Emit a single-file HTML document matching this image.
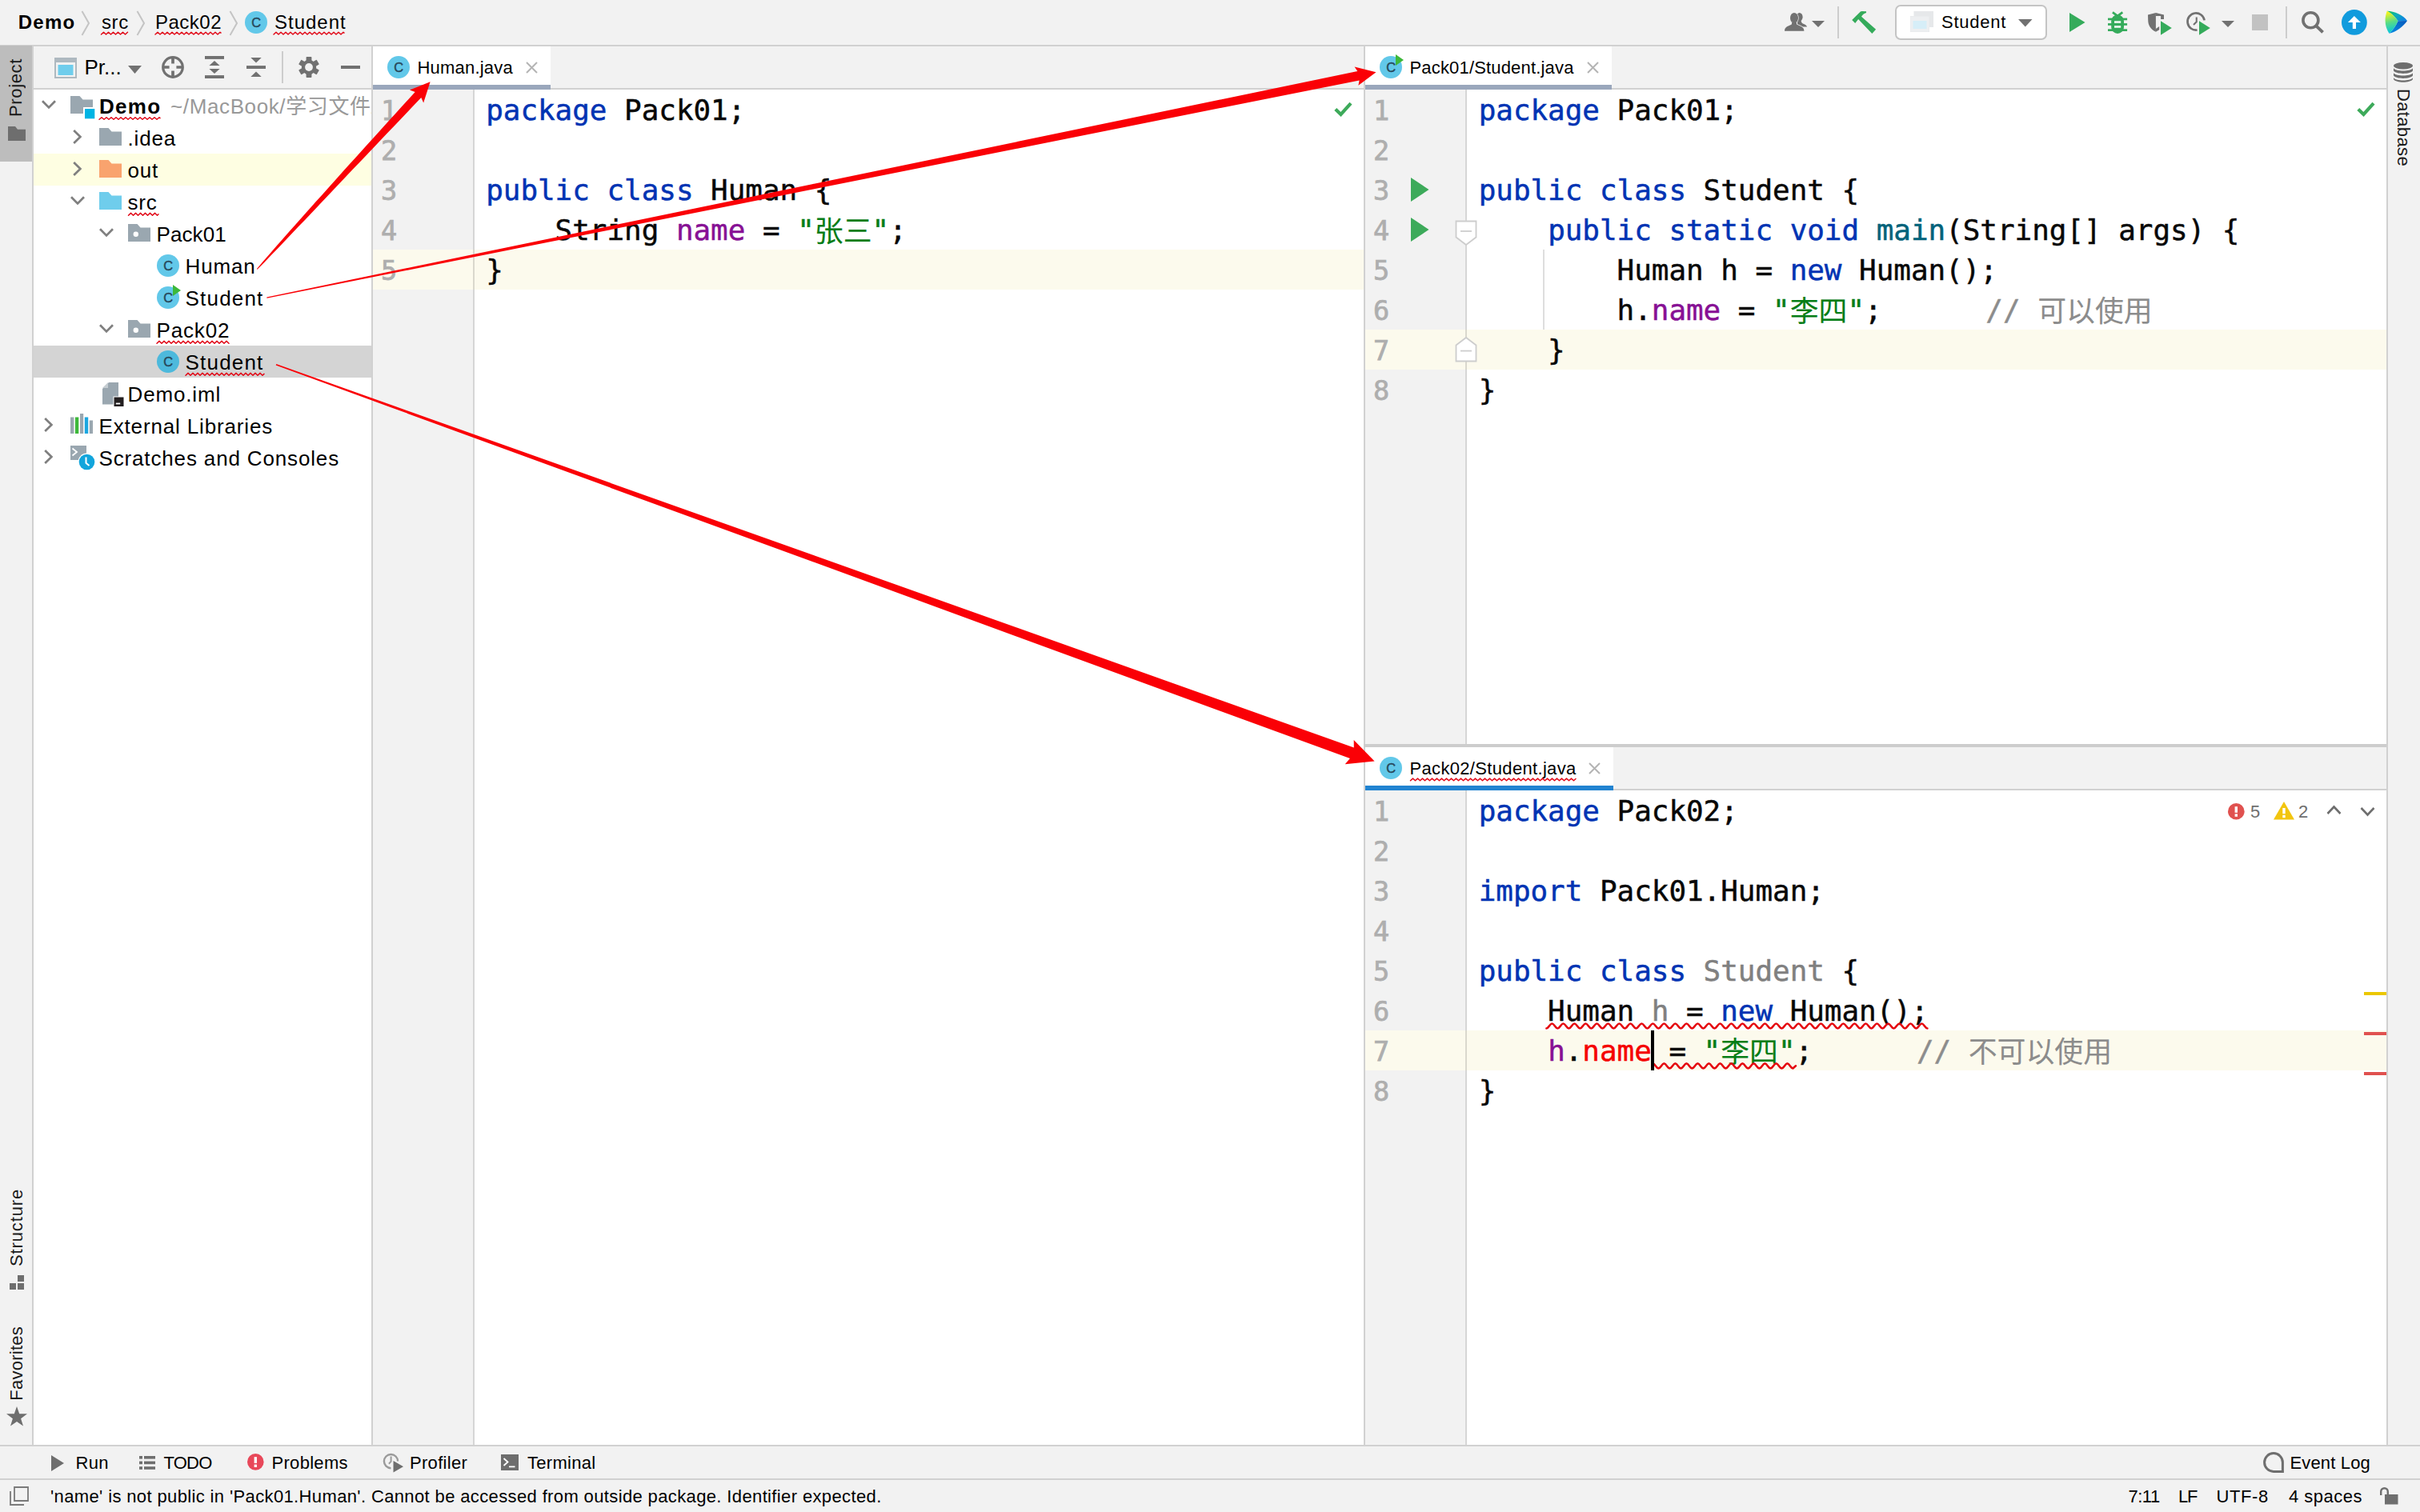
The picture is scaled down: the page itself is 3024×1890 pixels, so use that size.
<!DOCTYPE html>
<html lang="zh"><head><meta charset="utf-8"><title>Demo – Student.java</title>
<style>
*{box-sizing:border-box;margin:0;padding:0}
html,body{width:3024px;height:1890px;overflow:hidden;background:#F2F2F2}
body{position:relative;font-family:"Liberation Sans","Noto Sans CJK SC",sans-serif;font-size:26px;color:#000}
.code{position:absolute;height:50px;line-height:50px;margin-top:1.3px;font-family:"DejaVu Sans Mono","Liberation Mono","Noto Sans CJK SC",monospace;font-size:35.9px;white-space:pre;color:#080808;-webkit-text-stroke:0.5px}
.ln{position:absolute;height:50px;line-height:50px;margin-top:1.9px;font-family:"DejaVu Sans Mono","Liberation Mono","Noto Sans CJK SC",monospace;font-size:33.6px;color:#AEAEAE;-webkit-text-stroke:0.75px}
.z{-webkit-text-stroke:0.1px;position:relative;top:1.5px} .k{color:#0033B3} .f{color:#871094} .s{color:#067D17} .c{color:#8C8C8C} .m{color:#00627A} .g{color:#808080} .e{color:#F50000}
#root{position:absolute;left:0;top:0;width:3024px;height:1890px;overflow:hidden;background:#F2F2F2}
</style></head><body><div id="root">
<div style="position:absolute;left:0px;top:56px;width:3024px;height:2px;background:#D1D1D1;"></div>
<div style="position:absolute;left:0px;top:57px;width:40px;height:145px;background:#BDBDBD;"></div>
<div style="position:absolute;left:40px;top:58px;width:2px;height:1748px;background:#D1D1D1;"></div>
<div style="position:absolute;left:42px;top:110px;width:422px;height:2px;background:#D1D1D1;"></div>
<div style="position:absolute;left:42px;top:112px;width:422px;height:1694px;background:#fff;"></div>
<div style="position:absolute;left:464px;top:58px;width:2px;height:1748px;background:#D1D1D1;"></div>
<div style="position:absolute;left:466px;top:110px;width:1238px;height:2px;background:#D1D1D1;"></div>
<div style="position:absolute;left:466px;top:112px;width:126px;height:1694px;background:#F2F2F2;"></div>
<div style="position:absolute;left:591px;top:112px;width:2px;height:1694px;background:#D6D6D6;"></div>
<div style="position:absolute;left:593px;top:112px;width:1111px;height:1694px;background:#fff;"></div>
<div style="position:absolute;left:1704px;top:58px;width:2px;height:1748px;background:#D1D1D1;"></div>
<div style="position:absolute;left:1706px;top:110px;width:1276px;height:2px;background:#D1D1D1;"></div>
<div style="position:absolute;left:1706px;top:112px;width:126px;height:818px;background:#F2F2F2;"></div>
<div style="position:absolute;left:1831px;top:112px;width:2px;height:818px;background:#D6D6D6;"></div>
<div style="position:absolute;left:1833px;top:112px;width:1149px;height:818px;background:#fff;"></div>
<div style="position:absolute;left:1704px;top:930px;width:1278px;height:4px;background:#CDCDCD;"></div>
<div style="position:absolute;left:1706px;top:986px;width:1276px;height:2px;background:#D1D1D1;"></div>
<div style="position:absolute;left:1706px;top:988px;width:126px;height:818px;background:#F2F2F2;"></div>
<div style="position:absolute;left:1831px;top:988px;width:2px;height:818px;background:#D6D6D6;"></div>
<div style="position:absolute;left:1833px;top:988px;width:1149px;height:818px;background:#fff;"></div>
<div style="position:absolute;left:2982px;top:58px;width:2px;height:1748px;background:#D1D1D1;"></div>
<div style="position:absolute;left:0px;top:1806px;width:3024px;height:2px;background:#D1D1D1;"></div>
<div style="position:absolute;left:0px;top:1848px;width:3024px;height:2px;background:#D1D1D1;"></div>
<div style="position:absolute;left:22.8px;top:0px;height:56px;line-height:56px;font-size:24px;color:#000;letter-spacing:1.2px;white-space:pre;font-weight:bold;">Demo</div>
<svg style="position:absolute;left:101px;top:13px;" width="12" height="32" viewBox="0 0 12 32"><path d="M1.5,1 L10,16 L1.5,31" fill="none" stroke="#C4C4C4" stroke-width="2"/></svg>
<div style="position:absolute;left:127px;top:0px;height:56px;line-height:56px;font-size:24px;color:#000;letter-spacing:0.6px;white-space:pre;font-weight:normal;">src</div>
<svg style="position:absolute;left:169.5px;top:13px;" width="12" height="32" viewBox="0 0 12 32"><path d="M1.5,1 L10,16 L1.5,31" fill="none" stroke="#C4C4C4" stroke-width="2"/></svg>
<div style="position:absolute;left:194px;top:0px;height:56px;line-height:56px;font-size:24px;color:#000;letter-spacing:0.5px;white-space:pre;font-weight:normal;">Pack02</div>
<svg style="position:absolute;left:285.5px;top:13px;" width="12" height="32" viewBox="0 0 12 32"><path d="M1.5,1 L10,16 L1.5,31" fill="none" stroke="#C4C4C4" stroke-width="2"/></svg>
<svg style="position:absolute;left:304px;top:12px;" width="34" height="32" viewBox="0 0 34 32"><circle cx="16" cy="16" r="14" fill="#62C8E9"/><text x="16.2" y="21.7" text-anchor="middle" font-family="Liberation Sans, sans-serif" font-size="16.4" fill="#27475A" stroke="#27475A" stroke-width="0.45">C</text></svg>
<div style="position:absolute;left:343px;top:0px;height:56px;line-height:56px;font-size:24px;color:#000;letter-spacing:1.0px;white-space:pre;font-weight:normal;">Student</div>
<svg style="position:absolute;left:0px;top:0px;pointer-events:none" width="480" height="56" viewBox="0 0 480 56"><path d="M126.5,43.0 L129.5,40.2 L132.5,43.0 L135.5,40.2 L138.5,43.0 L141.5,40.2 L144.5,43.0 L147.5,40.2 L150.5,43.0 L153.5,40.2 L156.5,43.0 L159.5,40.2" fill="none" stroke="#E10A19" stroke-width="1.5" stroke-linecap="round" stroke-linejoin="round"/><path d="M194.0,43.0 L197.0,40.2 L200.0,43.0 L203.0,40.2 L206.0,43.0 L209.0,40.2 L212.0,43.0 L215.0,40.2 L218.0,43.0 L221.0,40.2 L224.0,43.0 L227.0,40.2 L230.0,43.0 L233.0,40.2 L236.0,43.0 L239.0,40.2 L242.0,43.0 L245.0,40.2 L248.0,43.0 L251.0,40.2 L254.0,43.0 L257.0,40.2 L260.0,43.0 L263.0,40.2 L266.0,43.0 L269.0,40.2 L272.0,43.0 L275.0,40.2 L276.0,41.1" fill="none" stroke="#E10A19" stroke-width="1.5" stroke-linecap="round" stroke-linejoin="round"/><path d="M342.0,43.0 L345.0,40.2 L348.0,43.0 L351.0,40.2 L354.0,43.0 L357.0,40.2 L360.0,43.0 L363.0,40.2 L366.0,43.0 L369.0,40.2 L372.0,43.0 L375.0,40.2 L378.0,43.0 L381.0,40.2 L384.0,43.0 L387.0,40.2 L390.0,43.0 L393.0,40.2 L396.0,43.0 L399.0,40.2 L402.0,43.0 L405.0,40.2 L408.0,43.0 L411.0,40.2 L414.0,43.0 L417.0,40.2 L420.0,43.0 L423.0,40.2 L426.0,43.0 L429.0,40.2 L430.0,41.1" fill="none" stroke="#E10A19" stroke-width="1.5" stroke-linecap="round" stroke-linejoin="round"/></svg>
<svg style="position:absolute;left:2229px;top:15px;" width="31" height="26" viewBox="0 0 31 26"><g fill="#717171"><ellipse cx="19.6" cy="6.3" rx="4" ry="5.4"/><path d="M17,10 H21.6 C21.6,13 22.6,14 25,15 C27.5,16 29,17.5 29,18.4 H17 Z"/></g><g fill="#717171" stroke="#F2F2F2" stroke-width="1.4" paint-order="stroke"><ellipse cx="13" cy="7.6" rx="5" ry="6.7"/><path d="M1,23.8 C1,18.5 5.5,17.6 9,16 C10.2,15.3 10.4,14 10.2,13 H15.8 C15.6,14 15.8,15.3 17,16 C20.5,17.6 25.4,18.5 25.4,23.8 Z"/></g><rect x="10.3" y="11" width="5.4" height="4" fill="#717171"/></svg>
<svg style="position:absolute;left:2264px;top:26px;" width="16" height="8" viewBox="0 0 16 8"><path d="M0,0 H16 L8,8 Z" fill="#717171"/></svg>
<div style="position:absolute;left:2296px;top:8px;width:2px;height:40px;background:#CDCDCD;"></div>
<svg style="position:absolute;left:2314px;top:13px;" width="31" height="30" viewBox="0 0 31 30"><path d="M0.2,11.9 L10.8,1.6 Q11.6,1 12.6,1 L18,1.2 V2.9 C15.4,3.6 13.2,5.3 12,7.7 L30.1,23.8 L25.3,28.9 L8.1,11.1 L4.2,15.9 Z" fill="#35AB5B"/></svg>
<div style="position:absolute;left:2368px;top:6px;width:190px;height:44px;background:#fff;border:2px solid #C4C4C4;border-radius:7px"></div>
<svg style="position:absolute;left:2387px;top:14px;" width="29" height="26" viewBox="0 0 29 26"><rect x="4.5" y="0" width="24.5" height="20" fill="#E6E8EA"/><rect x="0" y="6" width="24" height="20" fill="#E6E8EA"/><rect x="0.5" y="6.5" width="23" height="19" fill="#EDEFF1"/><rect x="3.5" y="12" width="17" height="10" fill="#D6EEF8"/></svg>
<div style="position:absolute;left:2426px;top:6px;height:44px;line-height:44px;font-size:22px;color:#000;letter-spacing:0.75px;white-space:pre;font-weight:normal;">Student</div>
<svg style="position:absolute;left:2522px;top:24px;" width="18" height="10" viewBox="0 0 18 10"><path d="M0,0 H17.5 L8.75,9.5 Z" fill="#717171"/></svg>
<svg style="position:absolute;left:2586px;top:16px;" width="20" height="24" viewBox="0 0 20 24"><path d="M0,0 L19.5,12 L0,24 Z" fill="#35AB5B"/></svg>
<svg style="position:absolute;left:2633px;top:14px;" width="26" height="28" viewBox="0 0 26 28"><g fill="#35AB5B"><path d="M5.2,12.3 A7.9,7.9 0 0 1 21,12.3 V20 A7.9,7.9 0 0 1 5.2,20 Z"/><rect x="1" y="8.6" width="24.1" height="2.7"/><rect x="1" y="15.1" width="24.1" height="2.7"/><rect x="1" y="22.3" width="24.1" height="2.7"/></g><path d="M6.9,1.3 L12.6,5.6 M19.3,1.3 L13.6,5.6" stroke="#35AB5B" stroke-width="2.7" fill="none"/><rect x="9" y="12.2" width="8.2" height="2.7" fill="#ECF7EF"/><rect x="9" y="18.1" width="8.2" height="2.7" fill="#ECF7EF"/></svg>
<svg style="position:absolute;left:2683px;top:16px;" width="32" height="28" viewBox="0 0 32 28"><g fill="#717171"><path d="M1,2.5 L10.9,0 V23.8 C4,20.4 1.2,15.4 1.2,9 Z"/><path d="M10.9,0 L21,2.5 V7.9 H17.1 V3.9 H10.9 Z"/><path d="M10.9,20 L15.2,17 V21.3 L10.9,23.8 Z"/></g><path d="M17,10.2 L30.8,19 L17,27.8 Z" fill="#35AB5B"/></svg>
<svg style="position:absolute;left:2731px;top:14px;" width="32" height="30" viewBox="0 0 32 30"><path d="M23.6,11.4 A10.6,10.6 0 1 0 14.6,23.5" fill="none" stroke="#717171" stroke-width="2.7"/><path d="M13.75,7.4 V13.2 L10,17" fill="none" stroke="#717171" stroke-width="2.1"/><path d="M17,12.2 L30.8,21 L17,29.8 Z" fill="#35AB5B"/></svg>
<svg style="position:absolute;left:2776px;top:26px;" width="16" height="8" viewBox="0 0 16 8"><path d="M0,0 H16 L8,8 Z" fill="#717171"/></svg>
<div style="position:absolute;left:2814px;top:18px;width:20px;height:20px;background:#C2C2C2;"></div>
<div style="position:absolute;left:2856px;top:8px;width:2px;height:40px;background:#CDCDCD;"></div>
<svg style="position:absolute;left:2875px;top:13px;" width="30" height="30" viewBox="0 0 30 30"><circle cx="12.4" cy="12.3" r="9.5" fill="none" stroke="#717171" stroke-width="3.6"/><path d="M19,19.1 L27.6,27.3" stroke="#717171" stroke-width="3.9" fill="none"/></svg>
<svg style="position:absolute;left:2926px;top:12px;" width="32" height="32" viewBox="0 0 32 32"><circle cx="15.9" cy="15.9" r="15.9" fill="#119BDD"/><path d="M15.85,8 L23.9,15.9 H18 V24 H13.8 V15.9 H7.9 Z" fill="#fff"/></svg>
<svg style="position:absolute;left:2979px;top:13px;" width="30" height="30" viewBox="0 0 30 30"><defs><linearGradient id="lg1" x1="0.3" y1="0" x2="0.45" y2="1"><stop offset="0.05" stop-color="#F4F41C"/><stop offset=".5" stop-color="#58DC86"/><stop offset="1" stop-color="#00C4E2"/></linearGradient><linearGradient id="lg2" x1="0" y1="0" x2="1" y2="0.5"><stop offset="0" stop-color="#10C64E"/><stop offset=".5" stop-color="#0CB0B4"/><stop offset="1" stop-color="#0E86E0"/></linearGradient><linearGradient id="lg3" x1="1" y1="0" x2="0" y2="1"><stop offset="0" stop-color="#0658BC"/><stop offset="1" stop-color="#0A8EE2"/></linearGradient></defs><path d="M3.8,0.8 C13,1 24,6 29,12.9 L17.5,13.2 C14,8 9,3.5 3.8,0.8 Z" fill="url(#lg2)"/><path d="M29,12.9 L17.5,13.2 C15,19 11,25 6.4,28.8 C15,27 24,20 29,12.9 Z" fill="url(#lg3)"/><path d="M3.8,0.8 C9,3.5 14,8 17.5,13.2 C15,19 11,25 6.4,28.8 C2,22 -0.5,12 3.8,0.8 Z" fill="url(#lg1)"/></svg>
<div style="position:absolute;left:0px;top:-253.8px;width:40px;height:400px;"><div style="position:absolute;left:0;bottom:0;writing-mode:vertical-rl;transform:rotate(180deg);width:40px;line-height:40px;font-size:22px;letter-spacing:0.65px;white-space:pre;color:#1a1a1a">Project</div></div>
<svg style="position:absolute;left:10px;top:158px;" width="22" height="18" viewBox="0 0 22 18"><path d="M0,0 H9 L12,3.8 H22 V18 H0 Z" fill="#6E6E6E"/></svg>
<div style="position:absolute;left:0.8px;top:1182.5px;width:40px;height:400px;"><div style="position:absolute;left:0;bottom:0;writing-mode:vertical-rl;transform:rotate(180deg);width:40px;line-height:40px;font-size:22px;letter-spacing:0.85px;white-space:pre;color:#1a1a1a">Structure</div></div>
<svg style="position:absolute;left:12px;top:1594px;" width="18" height="18" viewBox="0 0 18 18"><g fill="#6E6E6E"><rect x="10" y="0" width="8" height="8"/><rect x="0" y="10" width="8" height="8"/><rect x="10" y="10" width="8" height="8"/></g></svg>
<div style="position:absolute;left:0.8px;top:1350.4px;width:40px;height:400px;"><div style="position:absolute;left:0;bottom:0;writing-mode:vertical-rl;transform:rotate(180deg);width:40px;line-height:40px;font-size:22px;letter-spacing:0.25px;white-space:pre;color:#1a1a1a">Favorites</div></div>
<svg style="position:absolute;left:8px;top:1758px;" width="26" height="25" viewBox="0 0 26 25"><path d="M13,0 L16.2,9.3 H26 L18.1,15.2 L21,24.6 L13,19 L5,24.6 L7.9,15.2 L0,9.3 H9.8 Z" fill="#6E6E6E"/></svg>
<svg style="position:absolute;left:2991px;top:78px;" width="24" height="25" viewBox="0 0 24 25"><g fill="#6E6E6E"><ellipse cx="12" cy="4.2" rx="12" ry="4.2"/><path d="M0,7.2 C3,11.5 21,11.5 24,7.2 V10.5 C21,15 3,15 0,10.5 Z"/><path d="M0,13.2 C3,17.5 21,17.5 24,13.2 V16.5 C21,21 3,21 0,16.5 Z"/><path d="M0,19.2 C3,23.5 21,23.5 24,19.2 V21 C21,26 3,26 0,21 Z"/></g></svg>
<div style="position:absolute;left:2982.8px;top:111.4px;width:40px;line-height:40px;writing-mode:vertical-rl;font-size:22px;letter-spacing:0.35px;white-space:pre;color:#1a1a1a">Database</div>
<svg style="position:absolute;left:68px;top:72px;" width="28" height="26" viewBox="0 0 28 26"><rect x="0" y="0" width="28" height="26" fill="#AEB9C0"/><rect x="2" y="6" width="24" height="18" fill="#F2F2F2"/><rect x="4.5" y="9" width="19" height="13" fill="#6FCDEC"/></svg>
<div style="position:absolute;left:105.5px;top:58px;height:52px;line-height:52px;font-size:26px;color:#000;letter-spacing:0.0px;white-space:pre;font-weight:normal;">Pr...</div>
<svg style="position:absolute;left:160px;top:82px;" width="17" height="10" viewBox="0 0 17 10"><path d="M0,0 H17 L8.5,10 Z" fill="#717171"/></svg>
<svg style="position:absolute;left:201px;top:69px;" width="30" height="30" viewBox="0 0 30 30"><circle cx="15" cy="15" r="12.3" fill="none" stroke="#717171" stroke-width="3.2"/><g stroke="#717171" stroke-width="3.7"><path d="M15,3 V10.6 M15,19.4 V27 M3,15 H10.6 M19.4,15 H27"/></g></svg>
<svg style="position:absolute;left:256px;top:70px;" width="24" height="28" viewBox="0 0 24 28"><g fill="#717171"><rect x="0" y="0" width="24" height="3.9"/><rect x="0" y="24.1" width="24" height="3.9"/><path d="M12,6 L18.6,11.9 H5.4 Z"/><path d="M12,22 L18.6,16.1 H5.4 Z"/></g></svg>
<svg style="position:absolute;left:308px;top:71px;" width="24" height="26" viewBox="0 0 24 26"><g fill="#717171"><rect x="0" y="11.1" width="24" height="3.9"/><path d="M12,7.6 L18.7,1 H5.3 Z"/><path d="M12,18.4 L18.7,25 H5.3 Z"/></g></svg>
<div style="position:absolute;left:352px;top:64px;width:2px;height:40px;background:#CDCDCD;"></div>
<svg style="position:absolute;left:373px;top:71px;" width="26" height="26" viewBox="0 0 26 26"><g fill="#717171"><circle cx="13" cy="13" r="9.2"/><rect x="9.6" y="0" width="6.8" height="7" rx="0.8" transform="rotate(0 13 13)"/><rect x="9.6" y="0" width="6.8" height="7" rx="0.8" transform="rotate(60 13 13)"/><rect x="9.6" y="0" width="6.8" height="7" rx="0.8" transform="rotate(120 13 13)"/><rect x="9.6" y="0" width="6.8" height="7" rx="0.8" transform="rotate(180 13 13)"/><rect x="9.6" y="0" width="6.8" height="7" rx="0.8" transform="rotate(240 13 13)"/><rect x="9.6" y="0" width="6.8" height="7" rx="0.8" transform="rotate(300 13 13)"/></g><circle cx="13" cy="13" r="4.9" fill="#F2F2F2"/></svg>
<div style="position:absolute;left:426px;top:82px;width:24px;height:4px;background:#717171;"></div>
<div style="position:absolute;left:42px;top:192px;width:422px;height:40px;background:#FEFEE2;"></div>
<div style="position:absolute;left:42px;top:432px;width:422px;height:40px;background:#D4D4D4;"></div>
<svg style="position:absolute;left:52px;top:125px;" width="18" height="12" viewBox="0 0 18 12"><path d="M1,1.2 L9,9.4 L17,1.2" fill="none" stroke="#7F7F7F" stroke-width="2.7"/></svg>
<svg style="position:absolute;left:88px;top:120px;" width="31" height="29" viewBox="0 0 31 29"><path d="M0,0 H11.5 L15.5,4.5 H28 V22 H0 Z" fill="#9AA7B0"/><rect x="16" y="14" width="15" height="15" fill="#fff"/><rect x="18" y="16" width="12.3" height="12.3" fill="#00B4E4"/></svg>
<div style="position:absolute;left:124.0px;top:113px;height:40px;line-height:40px;font-size:26px;color:#000;letter-spacing:1.3px;white-space:pre;font-weight:bold;">Demo</div>
<div style="position:absolute;left:213.0px;top:113px;height:40px;line-height:40px;font-size:26px;color:#999999;letter-spacing:0.62px;white-space:pre;font-weight:normal;width:251px;overflow:hidden;">~/MacBook/学习文件/Java</div>
<svg style="position:absolute;left:91px;top:162px;" width="12" height="18" viewBox="0 0 12 18"><path d="M1.2,1 L9.4,9 L1.2,17" fill="none" stroke="#7F7F7F" stroke-width="2.7"/></svg>
<svg style="position:absolute;left:124px;top:160px;" width="28" height="22" viewBox="0 0 28 22"><path d="M0,0 H11.5 L15.5,4.5 H28 V22 H0 Z" fill="#9AA7B0"/></svg>
<div style="position:absolute;left:159.5px;top:153px;height:40px;line-height:40px;font-size:26px;color:#000;letter-spacing:0.85px;white-space:pre;font-weight:normal;">.idea</div>
<svg style="position:absolute;left:91px;top:202px;" width="12" height="18" viewBox="0 0 12 18"><path d="M1.2,1 L9.4,9 L1.2,17" fill="none" stroke="#7F7F7F" stroke-width="2.7"/></svg>
<svg style="position:absolute;left:124px;top:200px;" width="28" height="22" viewBox="0 0 28 22"><path d="M0,0 H11.5 L15.5,4.5 H28 V22 H0 Z" fill="#F9A36E"/></svg>
<div style="position:absolute;left:159.5px;top:193px;height:40px;line-height:40px;font-size:26px;color:#000;letter-spacing:0.85px;white-space:pre;font-weight:normal;">out</div>
<svg style="position:absolute;left:88px;top:245px;" width="18" height="12" viewBox="0 0 18 12"><path d="M1,1.2 L9,9.4 L17,1.2" fill="none" stroke="#7F7F7F" stroke-width="2.7"/></svg>
<svg style="position:absolute;left:124px;top:240px;" width="28" height="22" viewBox="0 0 28 22"><path d="M0,0 H11.5 L15.5,4.5 H28 V22 H0 Z" fill="#6FCDEC"/></svg>
<div style="position:absolute;left:159.5px;top:233px;height:40px;line-height:40px;font-size:26px;color:#000;letter-spacing:0.85px;white-space:pre;font-weight:normal;">src</div>
<svg style="position:absolute;left:124px;top:285px;" width="18" height="12" viewBox="0 0 18 12"><path d="M1,1.2 L9,9.4 L17,1.2" fill="none" stroke="#7F7F7F" stroke-width="2.7"/></svg>
<svg style="position:absolute;left:160px;top:280px;" width="28" height="22" viewBox="0 0 28 22"><path d="M0,0 H11.5 L15.5,4.5 H28 V22 H0 Z" fill="#9AA7B0"/><circle cx="9.8" cy="12.8" r="3.2" fill="#fff"/></svg>
<div style="position:absolute;left:195.5px;top:273px;height:40px;line-height:40px;font-size:26px;color:#000;letter-spacing:0.1px;white-space:pre;font-weight:normal;">Pack01</div>
<svg style="position:absolute;left:194px;top:316px;" width="34" height="32" viewBox="0 0 34 32"><circle cx="16" cy="16" r="14" fill="#62C8E9"/><text x="16.2" y="21.7" text-anchor="middle" font-family="Liberation Sans, sans-serif" font-size="16.4" fill="#27475A" stroke="#27475A" stroke-width="0.45">C</text></svg>
<div style="position:absolute;left:231.5px;top:313px;height:40px;line-height:40px;font-size:26px;color:#000;letter-spacing:0.85px;white-space:pre;font-weight:normal;">Human</div>
<svg style="position:absolute;left:194px;top:356px;" width="34" height="32" viewBox="0 0 34 32"><circle cx="16" cy="16" r="14" fill="#62C8E9"/><path d="M20,-1 V15 L33,6.5 Z" fill="#fff" opacity="0"/><text x="16.2" y="21.7" text-anchor="middle" font-family="Liberation Sans, sans-serif" font-size="16.4" fill="#27475A" stroke="#27475A" stroke-width="0.45">C</text><path d="M22,0 V14 L32,7 Z" fill="#3DB83A"/></svg>
<div style="position:absolute;left:231.5px;top:353px;height:40px;line-height:40px;font-size:26px;color:#000;letter-spacing:1.2px;white-space:pre;font-weight:normal;">Student</div>
<svg style="position:absolute;left:124px;top:405px;" width="18" height="12" viewBox="0 0 18 12"><path d="M1,1.2 L9,9.4 L17,1.2" fill="none" stroke="#7F7F7F" stroke-width="2.7"/></svg>
<svg style="position:absolute;left:160px;top:400px;" width="28" height="22" viewBox="0 0 28 22"><path d="M0,0 H11.5 L15.5,4.5 H28 V22 H0 Z" fill="#9AA7B0"/><circle cx="9.8" cy="12.8" r="3.2" fill="#fff"/></svg>
<div style="position:absolute;left:195.5px;top:393px;height:40px;line-height:40px;font-size:26px;color:#000;letter-spacing:0.85px;white-space:pre;font-weight:normal;">Pack02</div>
<svg style="position:absolute;left:194px;top:436px;" width="34" height="32" viewBox="0 0 34 32"><circle cx="16" cy="16" r="14" fill="#4DB9DC"/><text x="16.2" y="21.7" text-anchor="middle" font-family="Liberation Sans, sans-serif" font-size="16.4" fill="#27475A" stroke="#27475A" stroke-width="0.45">C</text></svg>
<div style="position:absolute;left:231.5px;top:433px;height:40px;line-height:40px;font-size:26px;color:#000;letter-spacing:1.2px;white-space:pre;font-weight:normal;">Student</div>
<svg style="position:absolute;left:128px;top:478px;" width="27" height="30" viewBox="0 0 27 30"><path d="M8,0 H20 V27.5 H0 V8 Z" fill="#9AA7B0"/><path d="M7,0 V7 H0 Z" fill="#C4CCD1"/><rect x="13.5" y="17.5" width="13" height="12.5" fill="#fff"/><rect x="14.5" y="18.5" width="12" height="11.5" fill="#231F20"/><rect x="16.8" y="25.6" width="5.4" height="1.8" fill="#fff"/></svg>
<div style="position:absolute;left:159.5px;top:473px;height:40px;line-height:40px;font-size:26px;color:#000;letter-spacing:0.85px;white-space:pre;font-weight:normal;">Demo.iml</div>
<svg style="position:absolute;left:55px;top:522px;" width="12" height="18" viewBox="0 0 12 18"><path d="M1.2,1 L9.4,9 L1.2,17" fill="none" stroke="#7F7F7F" stroke-width="2.7"/></svg>
<svg style="position:absolute;left:88px;top:517px;" width="28" height="25" viewBox="0 0 28 25"><rect x="0" y="4.5" width="4.4" height="20.5" fill="#9AA7B0"/><rect x="5.9" y="4.5" width="4.4" height="20.5" fill="#3DB83A"/><rect x="12" y="0" width="4.2" height="25" fill="#9AA7B0"/><rect x="17.8" y="4.5" width="4.4" height="20.5" fill="#1CA7E0"/><rect x="23.8" y="8.5" width="4.2" height="16.5" fill="#9AA7B0"/></svg>
<div style="position:absolute;left:123.5px;top:513px;height:40px;line-height:40px;font-size:26px;color:#000;letter-spacing:0.85px;white-space:pre;font-weight:normal;">External Libraries</div>
<svg style="position:absolute;left:55px;top:562px;" width="12" height="18" viewBox="0 0 12 18"><path d="M1.2,1 L9.4,9 L1.2,17" fill="none" stroke="#7F7F7F" stroke-width="2.7"/></svg>
<svg style="position:absolute;left:88px;top:557px;" width="31" height="31" viewBox="0 0 31 31"><rect x="0" y="0" width="20" height="18" fill="#9AA7B0"/><path d="M2.5,3.5 L8,8 L2.5,12.5" fill="none" stroke="#fff" stroke-width="1.8"/><circle cx="20.5" cy="20.5" r="11" fill="#fff"/><circle cx="20.5" cy="20.5" r="9.8" fill="#12A5DC"/><path d="M19.5,14.5 V21.8 L23.5,25" fill="none" stroke="#fff" stroke-width="2"/></svg>
<div style="position:absolute;left:123.5px;top:553px;height:40px;line-height:40px;font-size:26px;color:#000;letter-spacing:0.85px;white-space:pre;font-weight:normal;">Scratches and Consoles</div>
<svg style="position:absolute;left:0px;top:0px;pointer-events:none" width="480" height="620" viewBox="0 0 480 620"><path d="M124.0,149.3 L127.0,146.7 L130.0,149.3 L133.0,146.7 L136.0,149.3 L139.0,146.7 L142.0,149.3 L145.0,146.7 L148.0,149.3 L151.0,146.7 L154.0,149.3 L157.0,146.7 L160.0,149.3 L163.0,146.7 L166.0,149.3 L169.0,146.7 L172.0,149.3 L175.0,146.7 L178.0,149.3 L181.0,146.7 L184.0,149.3 L187.0,146.7 L190.0,149.3 L193.0,146.7 L196.0,149.3 L199.0,146.7 L200.0,147.6" fill="none" stroke="#E10A19" stroke-width="1.5" stroke-linecap="round" stroke-linejoin="round"/><path d="M160.5,269.2 L163.5,266.4 L166.5,269.2 L169.5,266.4 L172.5,269.2 L175.5,266.4 L178.5,269.2 L181.5,266.4 L184.5,269.2 L187.5,266.4 L190.5,269.2 L193.5,266.4 L196.5,269.2 L198.0,267.8" fill="none" stroke="#E10A19" stroke-width="1.5" stroke-linecap="round" stroke-linejoin="round"/><path d="M196.0,429.2 L199.0,426.4 L202.0,429.2 L205.0,426.4 L208.0,429.2 L211.0,426.4 L214.0,429.2 L217.0,426.4 L220.0,429.2 L223.0,426.4 L226.0,429.2 L229.0,426.4 L232.0,429.2 L235.0,426.4 L238.0,429.2 L241.0,426.4 L244.0,429.2 L247.0,426.4 L250.0,429.2 L253.0,426.4 L256.0,429.2 L259.0,426.4 L262.0,429.2 L265.0,426.4 L268.0,429.2 L271.0,426.4 L274.0,429.2 L277.0,426.4 L280.0,429.2 L283.0,426.4 L286.0,429.2" fill="none" stroke="#E10A19" stroke-width="1.5" stroke-linecap="round" stroke-linejoin="round"/><path d="M232.0,469.2 L235.0,466.4 L238.0,469.2 L241.0,466.4 L244.0,469.2 L247.0,466.4 L250.0,469.2 L253.0,466.4 L256.0,469.2 L259.0,466.4 L262.0,469.2 L265.0,466.4 L268.0,469.2 L271.0,466.4 L274.0,469.2 L277.0,466.4 L280.0,469.2 L283.0,466.4 L286.0,469.2 L289.0,466.4 L292.0,469.2 L295.0,466.4 L298.0,469.2 L301.0,466.4 L304.0,469.2 L307.0,466.4 L310.0,469.2 L313.0,466.4 L316.0,469.2 L319.0,466.4 L322.0,469.2 L325.0,466.4 L328.0,469.2 L330.0,467.4" fill="none" stroke="#E10A19" stroke-width="1.5" stroke-linecap="round" stroke-linejoin="round"/></svg>
<div style="position:absolute;left:466px;top:58px;width:222px;height:52px;background:#fff;"></div>
<div style="position:absolute;left:466px;top:106px;width:222px;height:6px;background:#9AA7BC;"></div>
<svg style="position:absolute;left:482px;top:68px;" width="34" height="32" viewBox="0 0 34 32"><circle cx="16" cy="16" r="14" fill="#62C8E9"/><text x="16.2" y="21.7" text-anchor="middle" font-family="Liberation Sans, sans-serif" font-size="16.4" fill="#27475A" stroke="#27475A" stroke-width="0.45">C</text></svg>
<div style="position:absolute;left:521.5px;top:60px;height:50px;line-height:50px;font-size:22px;color:#000;letter-spacing:0.2px;white-space:pre;font-weight:normal;">Human.java</div>
<svg style="position:absolute;left:656.5px;top:77px;" width="15" height="15" viewBox="0 0 15 15"><path d="M1,1 L14,14 M14,1 L1,14" stroke="#B4B4B4" stroke-width="2" fill="none"/></svg>
<div style="position:absolute;left:1706px;top:58px;width:308px;height:52px;background:#fff;"></div>
<div style="position:absolute;left:1706px;top:106px;width:308px;height:6px;background:#9AA7BC;"></div>
<svg style="position:absolute;left:1722px;top:68px;" width="34" height="32" viewBox="0 0 34 32"><circle cx="16" cy="16" r="14" fill="#62C8E9"/><path d="M20,-1 V15 L33,6.5 Z" fill="#fff" opacity="0"/><text x="16.2" y="21.7" text-anchor="middle" font-family="Liberation Sans, sans-serif" font-size="16.4" fill="#27475A" stroke="#27475A" stroke-width="0.45">C</text><path d="M22,0 V14 L32,7 Z" fill="#3DB83A"/></svg>
<div style="position:absolute;left:1761.5px;top:60px;height:50px;line-height:50px;font-size:22px;color:#000;letter-spacing:0.17px;white-space:pre;font-weight:normal;">Pack01/Student.java</div>
<svg style="position:absolute;left:1982.5px;top:77px;" width="15" height="15" viewBox="0 0 15 15"><path d="M1,1 L14,14 M14,1 L1,14" stroke="#B4B4B4" stroke-width="2" fill="none"/></svg>
<div style="position:absolute;left:1706px;top:934px;width:310px;height:52px;background:#fff;"></div>
<div style="position:absolute;left:1706px;top:982px;width:310px;height:6px;background:#2183D1;"></div>
<svg style="position:absolute;left:1722px;top:944px;" width="34" height="32" viewBox="0 0 34 32"><circle cx="16" cy="16" r="14" fill="#62C8E9"/><text x="16.2" y="21.7" text-anchor="middle" font-family="Liberation Sans, sans-serif" font-size="16.4" fill="#27475A" stroke="#27475A" stroke-width="0.45">C</text></svg>
<div style="position:absolute;left:1761.5px;top:936px;height:50px;line-height:50px;font-size:22px;color:#000;letter-spacing:0.33px;white-space:pre;font-weight:normal;">Pack02/Student.java</div>
<svg style="position:absolute;left:1984.5px;top:953px;" width="15" height="15" viewBox="0 0 15 15"><path d="M1,1 L14,14 M14,1 L1,14" stroke="#B4B4B4" stroke-width="2" fill="none"/></svg>
<svg style="position:absolute;left:1750px;top:960px;pointer-events:none" width="240" height="24" viewBox="0 0 240 24"><path d="M12.5,15.8 L15.5,13.1 L18.5,15.8 L21.5,13.1 L24.5,15.8 L27.5,13.1 L30.5,15.8 L33.5,13.1 L36.5,15.8 L39.5,13.1 L42.5,15.8 L45.5,13.1 L48.5,15.8 L51.5,13.1 L54.5,15.8 L57.5,13.1 L60.5,15.8 L63.5,13.1 L66.5,15.8 L69.5,13.1 L72.5,15.8 L75.5,13.1 L78.5,15.8 L81.5,13.1 L84.5,15.8 L87.5,13.1 L90.5,15.8 L93.5,13.1 L96.5,15.8 L99.5,13.1 L102.5,15.8 L105.5,13.1 L108.5,15.8 L111.5,13.1 L114.5,15.8 L117.5,13.1 L120.5,15.8 L123.5,13.1 L126.5,15.8 L129.5,13.1 L132.5,15.8 L135.5,13.1 L138.5,15.8 L141.5,13.1 L144.5,15.8 L147.5,13.1 L150.5,15.8 L153.5,13.1 L156.5,15.8 L159.5,13.1 L162.5,15.8 L165.5,13.1 L168.5,15.8 L171.5,13.1 L174.5,15.8 L177.5,13.1 L180.5,15.8 L183.5,13.1 L186.5,15.8 L189.5,13.1 L192.5,15.8 L195.5,13.1 L198.5,15.8 L201.5,13.1 L204.5,15.8 L207.5,13.1 L210.5,15.8 L213.5,13.1 L216.5,15.8 L219.0,13.5" fill="none" stroke="#E10A19" stroke-width="1.5" stroke-linecap="round" stroke-linejoin="round"/></svg>
<div style="position:absolute;left:466px;top:312px;width:1238px;height:50px;background:#FCFAED;"></div>
<div class="ln" style="left:475.9px;top:112px">1</div>
<div class="code" style="left:607.2px;top:112px"><span class="k">package</span> Pack01;</div>
<div class="ln" style="left:475.9px;top:162px">2</div>
<div class="ln" style="left:475.9px;top:212px">3</div>
<div class="code" style="left:607.2px;top:212px"><span class="k">public</span> <span class="k">class</span> Human {</div>
<div class="ln" style="left:475.9px;top:262px">4</div>
<div class="code" style="left:607.2px;top:262px">    String <span class="f">name</span> = <span class="s">"<span class="z">张三</span>"</span>;</div>
<div class="ln" style="left:475.9px;top:312px">5</div>
<div class="code" style="left:607.2px;top:312px">}</div>
<div style="position:absolute;left:591px;top:312px;width:2px;height:50px;background:#DAD8CD;"></div>
<svg style="position:absolute;left:1667px;top:127px;" width="23" height="19" viewBox="0 0 23 19"><path d="M1.8,9.5 L8.5,16 L21,2.2" fill="none" stroke="#3DAA5A" stroke-width="4.2"/></svg>
<div style="position:absolute;left:1706px;top:412px;width:1276px;height:50px;background:#FCFAED;"></div>
<div class="ln" style="left:1715.9px;top:112px">1</div>
<div class="code" style="left:1847.7px;top:112px"><span class="k">package</span> Pack01;</div>
<div class="ln" style="left:1715.9px;top:162px">2</div>
<div class="ln" style="left:1715.9px;top:212px">3</div>
<div class="code" style="left:1847.7px;top:212px"><span class="k">public</span> <span class="k">class</span> Student {</div>
<div class="ln" style="left:1715.9px;top:262px">4</div>
<div class="code" style="left:1847.7px;top:262px">    <span class="k">public</span> <span class="k">static</span> <span class="k">void</span> <span class="m">main</span>(String[] args) {</div>
<div class="ln" style="left:1715.9px;top:312px">5</div>
<div class="code" style="left:1847.7px;top:312px">        Human h = <span class="k">new</span> Human();</div>
<div class="ln" style="left:1715.9px;top:362px">6</div>
<div class="code" style="left:1847.7px;top:362px">        h.<span class="f">name</span> = <span class="s">"<span class="z">李四</span>"</span>;      <span class="c">// <span class="z">可以使用</span></span></div>
<div class="ln" style="left:1715.9px;top:412px">7</div>
<div class="code" style="left:1847.7px;top:412px">    }</div>
<div class="ln" style="left:1715.9px;top:462px">8</div>
<div class="code" style="left:1847.7px;top:462px">}</div>
<svg style="position:absolute;left:2944.5px;top:127px;" width="23" height="19" viewBox="0 0 23 19"><path d="M1.8,9.5 L8.5,16 L21,2.2" fill="none" stroke="#3DAA5A" stroke-width="4.2"/></svg>
<svg style="position:absolute;left:1763px;top:222px;" width="23" height="30" viewBox="0 0 23 30"><path d="M0,0 L22.5,15 L0,30 Z" fill="#3DAA5A"/></svg>
<svg style="position:absolute;left:1763px;top:272px;" width="23" height="30" viewBox="0 0 23 30"><path d="M0,0 L22.5,15 L0,30 Z" fill="#3DAA5A"/></svg>
<div style="position:absolute;left:1831px;top:306px;width:2px;height:116px;background:#D6D6D6;"></div>
<div style="position:absolute;left:1831px;top:412px;width:2px;height:50px;background:#DAD8CD;"></div>
<svg style="position:absolute;left:1818px;top:275px;" width="28" height="33" viewBox="0 0 28 33"><path d="M1.5,1.5 H26.5 V21.5 L14,31 L1.5,21.5 Z" fill="#fff" stroke="#CDCDCD" stroke-width="1.8"/><path d="M7,14 H21" stroke="#CDCDCD" stroke-width="1.8"/></svg>
<svg style="position:absolute;left:1818px;top:420px;" width="28" height="33" viewBox="0 0 28 33"><path d="M1.5,31.5 H26.5 V11.5 L14,2 L1.5,11.5 Z" fill="#fff" stroke="#CDCDCD" stroke-width="1.8"/><path d="M7,18.6 H21" stroke="#CDCDCD" stroke-width="1.8"/></svg>
<div style="position:absolute;left:1928px;top:312px;width:2px;height:100px;background:#DEDEDE;"></div>
<div style="position:absolute;left:1706px;top:1288px;width:1276px;height:50px;background:#FCFAED;"></div>
<div class="ln" style="left:1715.9px;top:988px">1</div>
<div class="code" style="left:1847.7px;top:988px"><span class="k">package</span> Pack02;</div>
<div class="ln" style="left:1715.9px;top:1038px">2</div>
<div class="ln" style="left:1715.9px;top:1088px">3</div>
<div class="code" style="left:1847.7px;top:1088px"><span class="k">import</span> Pack01.Human;</div>
<div class="ln" style="left:1715.9px;top:1138px">4</div>
<div class="ln" style="left:1715.9px;top:1188px">5</div>
<div class="code" style="left:1847.7px;top:1188px"><span class="k">public</span> <span class="k">class</span> <span class="g">Student</span> {</div>
<div class="ln" style="left:1715.9px;top:1238px">6</div>
<div class="code" style="left:1847.7px;top:1238px">    Human <span class="g">h</span> = <span class="k">new</span> Human();</div>
<div class="ln" style="left:1715.9px;top:1288px">7</div>
<div class="code" style="left:1847.7px;top:1288px">    <span class="f">h</span>.<span class="e">name</span> = <span class="s">"<span class="z">李四</span>"</span>;      <span class="c">// <span class="z">不可以使用</span></span></div>
<div class="ln" style="left:1715.9px;top:1338px">8</div>
<div class="code" style="left:1847.7px;top:1338px">}</div>
<div style="position:absolute;left:1831px;top:1288px;width:2px;height:50px;background:#DAD8CD;"></div>
<svg style="position:absolute;left:1900px;top:1260px;pointer-events:none" width="560" height="90" viewBox="0 0 560 90"><path d="M32.4,25.5 C35.3,25.5 36.5,19.5 39.4,19.5 C42.3,19.5 43.5,25.5 46.4,25.5 C49.3,25.5 50.5,19.5 53.4,19.5 C56.3,19.5 57.5,25.5 60.4,25.5 C63.3,25.5 64.5,19.5 67.4,19.5 C70.3,19.5 71.5,25.5 74.4,25.5 C77.3,25.5 78.5,19.5 81.4,19.5 C84.3,19.5 85.5,25.5 88.4,25.5 C91.3,25.5 92.5,19.5 95.4,19.5 C98.3,19.5 99.5,25.5 102.4,25.5 C105.3,25.5 106.5,19.5 109.4,19.5 C112.3,19.5 113.5,25.5 116.4,25.5 C119.3,25.5 120.5,19.5 123.4,19.5 C126.3,19.5 127.5,25.5 130.4,25.5 C133.3,25.5 134.5,19.5 137.4,19.5 C140.3,19.5 141.5,25.5 144.4,25.5 C147.3,25.5 148.5,19.5 151.4,19.5 C154.3,19.5 155.5,25.5 158.4,25.5 C161.3,25.5 162.5,19.5 165.4,19.5 C168.3,19.5 169.5,25.5 172.4,25.5 C175.3,25.5 176.5,19.5 179.4,19.5 C182.3,19.5 183.5,25.5 186.4,25.5 C189.3,25.5 190.5,19.5 193.4,19.5 C196.3,19.5 197.5,25.5 200.4,25.5 C203.3,25.5 204.5,19.5 207.4,19.5 C210.3,19.5 211.5,25.5 214.4,25.5 C217.3,25.5 218.5,19.5 221.4,19.5 C224.3,19.5 225.5,25.5 228.4,25.5 C231.3,25.5 232.5,19.5 235.4,19.5 C238.3,19.5 239.5,25.5 242.4,25.5 C245.3,25.5 246.5,19.5 249.4,19.5 C252.3,19.5 253.5,25.5 256.4,25.5 C259.3,25.5 260.5,19.5 263.4,19.5 C266.3,19.5 267.5,25.5 270.4,25.5 C273.3,25.5 274.5,19.5 277.4,19.5 C280.3,19.5 281.5,25.5 284.4,25.5 C287.3,25.5 288.5,19.5 291.4,19.5 C294.3,19.5 295.5,25.5 298.4,25.5 C301.3,25.5 302.5,19.5 305.4,19.5 C308.3,19.5 309.5,25.5 312.4,25.5 C315.3,25.5 316.5,19.5 319.4,19.5 C322.3,19.5 323.5,25.5 326.4,25.5 C329.3,25.5 330.5,19.5 333.4,19.5 C336.3,19.5 337.5,25.5 340.4,25.5 C343.3,25.5 344.5,19.5 347.4,19.5 C350.3,19.5 351.5,25.5 354.4,25.5 C357.3,25.5 358.5,19.5 361.4,19.5 C364.3,19.5 365.5,25.5 368.4,25.5 C371.3,25.5 372.5,19.5 375.4,19.5 C378.3,19.5 379.5,25.5 382.4,25.5 C385.3,25.5 386.5,19.5 389.4,19.5 C392.3,19.5 393.5,25.5 396.4,25.5 C399.3,25.5 400.5,19.5 403.4,19.5 C406.3,19.5 407.5,25.5 410.4,25.5 C413.3,25.5 414.5,19.5 417.4,19.5 C420.3,19.5 421.5,25.5 424.4,25.5 C427.3,25.5 428.5,19.5 431.4,19.5 C434.3,19.5 435.5,25.5 438.4,25.5 C441.3,25.5 442.5,19.5 445.4,19.5 C448.3,19.5 449.5,25.5 452.4,25.5 C455.3,25.5 456.5,19.5 459.4,19.5 C462.3,19.5 463.5,25.5 466.4,25.5 C469.3,25.5 470.5,19.5 473.4,19.5 C476.3,19.5 477.5,25.5 480.4,25.5 C483.3,25.5 484.5,19.5 487.4,19.5 C490.3,19.5 491.5,25.5 494.4,25.5 C497.3,25.5 498.5,19.5 501.4,19.5 C504.3,19.5 505.5,25.5 508.4,25.5" fill="none" stroke="#E5080F" stroke-width="2.6" stroke-linecap="round" stroke-linejoin="round"/><path d="M165.4,69.4 C168.3,69.4 169.5,75.4 172.4,75.4 C175.3,75.4 176.5,69.4 179.4,69.4 C182.3,69.4 183.5,75.4 186.4,75.4 C189.3,75.4 190.5,69.4 193.4,69.4 C196.3,69.4 197.5,75.4 200.4,75.4 C203.3,75.4 204.5,69.4 207.4,69.4 C210.3,69.4 211.5,75.4 214.4,75.4 C217.3,75.4 218.5,69.4 221.4,69.4 C224.3,69.4 225.5,75.4 228.4,75.4 C231.3,75.4 232.5,69.4 235.4,69.4 C238.3,69.4 239.5,75.4 242.4,75.4 C245.3,75.4 246.5,69.4 249.4,69.4 C252.3,69.4 253.5,75.4 256.4,75.4 C259.3,75.4 260.5,69.4 263.4,69.4 C266.3,69.4 267.5,75.4 270.4,75.4 C273.3,75.4 274.5,69.4 277.4,69.4 C280.3,69.4 281.5,75.4 284.4,75.4 C287.3,75.4 288.5,69.4 291.4,69.4 C294.3,69.4 295.5,75.4 298.4,75.4 C301.3,75.4 302.5,69.4 305.4,69.4 C308.3,69.4 309.5,75.4 312.4,75.4 C315.3,75.4 316.5,69.4 319.4,69.4 C322.3,69.4 323.5,75.4 326.4,75.4 C329.3,75.4 330.5,69.4 333.4,69.4 C336.3,69.4 337.5,75.4 340.4,75.4 L344.0,72.3" fill="none" stroke="#E5080F" stroke-width="2.6" stroke-linecap="round" stroke-linejoin="round"/></svg>
<div style="position:absolute;left:2063px;top:1288px;width:4px;height:50px;background:#000;"></div>
<svg style="position:absolute;left:2784px;top:1004px;" width="21" height="21" viewBox="0 0 21 21"><circle cx="10.3" cy="10.3" r="10.3" fill="#E0514F"/><rect x="8.6" y="4.2" width="3.4" height="7.6" fill="#fff"/><rect x="8.6" y="13.4" width="3.4" height="3.4" fill="#fff"/></svg>
<div style="position:absolute;left:2812px;top:1002px;height:26px;line-height:26px;font-size:22px;color:#6E6E6E;letter-spacing:0px;white-space:pre;font-weight:normal;">5</div>
<svg style="position:absolute;left:2841px;top:1002px;" width="26" height="23" viewBox="0 0 26 23"><path d="M13,0 L26,22.5 H0 Z" fill="#F2C50F"/><rect x="11.3" y="8" width="3.4" height="7.2" fill="#fff"/><rect x="11.3" y="16.8" width="3.4" height="3.4" fill="#fff"/></svg>
<div style="position:absolute;left:2872px;top:1002px;height:26px;line-height:26px;font-size:22px;color:#6E6E6E;letter-spacing:0px;white-space:pre;font-weight:normal;">2</div>
<svg style="position:absolute;left:2907px;top:1006px;" width="19" height="13" viewBox="0 0 19 13"><path d="M1.5,11 L9.5,2.5 L17.5,11" fill="none" stroke="#6E6E6E" stroke-width="2.6"/></svg>
<svg style="position:absolute;left:2949px;top:1008px;" width="19" height="13" viewBox="0 0 19 13"><path d="M1.5,2 L9.5,10.5 L17.5,2" fill="none" stroke="#6E6E6E" stroke-width="2.6"/></svg>
<div style="position:absolute;left:2954px;top:1240px;width:28px;height:4px;background:#EBC700;"></div>
<div style="position:absolute;left:2954px;top:1290px;width:28px;height:4px;background:#E0514F;"></div>
<div style="position:absolute;left:2954px;top:1340px;width:28px;height:4px;background:#E0514F;"></div>
<svg style="position:absolute;left:64px;top:1819px;" width="17" height="20" viewBox="0 0 17 20"><path d="M0,0 L16,10 L0,20 Z" fill="#6E6E6E"/></svg>
<div style="position:absolute;left:94.5px;top:1808px;height:40px;line-height:40px;font-size:22px;color:#000;letter-spacing:0.3px;white-space:pre;font-weight:normal;line-height:41px;">Run</div>
<svg style="position:absolute;left:174px;top:1820px;" width="20" height="17" viewBox="0 0 20 17"><g fill="#6E6E6E"><rect x="0" y="0" width="4" height="3.6"/><rect x="6" y="0" width="14" height="3.6"/><rect x="0" y="6.6" width="4" height="3.6"/><rect x="6" y="6.6" width="14" height="3.6"/><rect x="0" y="13.2" width="4" height="3.6"/><rect x="6" y="13.2" width="14" height="3.6"/></g></svg>
<div style="position:absolute;left:204.5px;top:1808px;height:40px;line-height:40px;font-size:22px;color:#000;letter-spacing:-0.8px;white-space:pre;font-weight:normal;line-height:41px;">TODO</div>
<svg style="position:absolute;left:309px;top:1817px;" width="21" height="21" viewBox="0 0 21 21"><circle cx="10.3" cy="10.4" r="10.3" fill="#E8485A"/><rect x="8.6" y="4.2" width="3.4" height="7.8" fill="#fff"/><rect x="8.6" y="13.6" width="3.4" height="3.4" fill="#fff"/></svg>
<div style="position:absolute;left:339.5px;top:1808px;height:40px;line-height:40px;font-size:22px;color:#000;letter-spacing:0.3px;white-space:pre;font-weight:normal;line-height:41px;">Problems</div>
<svg style="position:absolute;left:478px;top:1816px;" width="27" height="25" viewBox="0 0 27 25"><path d="M10.5,0.8 A9.8,9.8 0 1 0 10.5,20.4 V18 A7.4,7.4 0 1 1 17.9,10.6 H20.3 A9.8,9.8 0 0 0 10.5,0.8 Z" fill="#9A9A9A"/><path d="M9.6,4.5 H11.6 V11.2 L8.6,14.4 L7.2,13 L9.6,10.4 Z" fill="#9A9A9A"/><path d="M13.5,10 L26,17.3 L13.5,24.6 Z" fill="#6E6E6E"/></svg>
<div style="position:absolute;left:512px;top:1808px;height:40px;line-height:40px;font-size:22px;color:#000;letter-spacing:0.3px;white-space:pre;font-weight:normal;line-height:41px;">Profiler</div>
<svg style="position:absolute;left:626px;top:1818px;" width="22" height="20" viewBox="0 0 22 20"><rect x="0" y="0" width="22" height="20" fill="#6E6E6E"/><path d="M3.5,5 L8.5,9.5 L3.5,14" fill="none" stroke="#fff" stroke-width="1.8"/><rect x="10" y="14.5" width="7.5" height="1.8" fill="#fff"/></svg>
<div style="position:absolute;left:659px;top:1808px;height:40px;line-height:40px;font-size:22px;color:#000;letter-spacing:0.3px;white-space:pre;font-weight:normal;line-height:41px;">Terminal</div>
<svg style="position:absolute;left:2828px;top:1815px;" width="27" height="27" viewBox="0 0 27 27"><path d="M13,1.6 A11.4,11.4 0 1 0 13,24.4 H24.4 V13 A11.4,11.4 0 0 0 13,1.6 Z" fill="none" stroke="#6E6E6E" stroke-width="3"/></svg>
<div style="position:absolute;left:2861.5px;top:1808px;height:40px;line-height:40px;font-size:22px;color:#000;letter-spacing:0.15px;white-space:pre;font-weight:normal;line-height:41px;">Event Log</div>
<svg style="position:absolute;left:12px;top:1858px;" width="24" height="24" viewBox="0 0 24 24"><path d="M6,1 H23 V18 H6 Z" fill="none" stroke="#7A7A7A" stroke-width="1.8"/><path d="M1,6 V23 H18" fill="none" stroke="#7A7A7A" stroke-width="1.8"/></svg>
<div style="position:absolute;left:63px;top:1850px;height:40px;line-height:40px;font-size:22px;color:#000;letter-spacing:0.37px;white-space:pre;font-weight:normal;line-height:42px;">'name' is not public in 'Pack01.Human'. Cannot be accessed from outside package. Identifier expected.</div>
<div style="position:absolute;left:2659.5px;top:1850px;height:40px;line-height:40px;font-size:22px;color:#000;letter-spacing:-0.5px;white-space:pre;font-weight:normal;line-height:42px;">7:11</div>
<div style="position:absolute;left:2722px;top:1850px;height:40px;line-height:40px;font-size:22px;color:#000;letter-spacing:-1.2px;white-space:pre;font-weight:normal;line-height:42px;">LF</div>
<div style="position:absolute;left:2769.5px;top:1850px;height:40px;line-height:40px;font-size:22px;color:#000;letter-spacing:0.6px;white-space:pre;font-weight:normal;line-height:42px;">UTF-8</div>
<div style="position:absolute;left:2860px;top:1850px;height:40px;line-height:40px;font-size:22px;color:#000;letter-spacing:0.5px;white-space:pre;font-weight:normal;line-height:42px;">4 spaces</div>
<svg style="position:absolute;left:2973px;top:1858px;" width="24" height="23" viewBox="0 0 24 23"><rect x="7" y="10" width="16.5" height="12.5" fill="#6E6E6E"/><path d="M2.2,11 V6.5 A4.3,4.3 0 0 1 10.8,6.5 V11" fill="none" stroke="#6E6E6E" stroke-width="2.4"/></svg>
<svg style="position:absolute;left:0px;top:0px;pointer-events:none" width="3024" height="1890" viewBox="0 0 3024 1890"><polygon points="321.6,336.8 330.3,328.0 338.8,319.1 347.4,310.2 355.9,301.2 364.4,292.3 372.9,283.3 381.5,274.4 390.0,265.4 398.5,256.4 407.0,247.5 415.5,238.5 424.0,229.5 432.5,220.6 441.0,211.6 449.5,202.7 458.1,193.7 466.6,184.8 475.1,175.8 483.6,166.8 492.1,157.9 500.7,149.0 509.2,140.0 517.7,131.1 526.3,122.1 529.2,128.5 537.6,102.2 512.0,112.6 518.7,115.0 510.3,124.2 502.0,133.3 493.7,142.5 485.4,151.6 477.1,160.8 468.8,169.9 460.5,179.1 452.2,188.3 443.9,197.4 435.6,206.6 427.3,215.8 419.1,225.0 410.8,234.2 402.6,243.4 394.3,252.6 386.1,261.8 377.9,271.1 369.7,280.3 361.4,289.6 353.3,298.8 345.1,308.1 336.9,317.4 328.8,326.7 320.8,336.2" fill="#FA0006"/><polygon points="333.5,372.8 1016.1,236.6 1698.6,100.4 1697.4,106.8 1719.5,90.2 1692.6,83.5 1696.3,89.0 1014.8,230.2 333.3,371.4" fill="#FA0006"/><polygon points="344.7,456.6 1015.8,702.3 1686.9,948.1 1680.8,955.2 1717.6,951.5 1691.7,925.1 1691.8,934.5 1018.6,694.8 345.3,455.0" fill="#FA0006"/></svg>
</div>
<script>(function(){var d=window.devicePixelRatio||1,w=window.innerWidth;if(d!==1&&Math.abs(w*d-3024)<4){var r=document.getElementById("root");r.style.transformOrigin="0 0";r.style.transform="scale("+(w/3024)+")";var e=[document.documentElement,document.body];for(var i=0;i<2;i++){e[i].style.width=w+"px";e[i].style.height=(1890/d)+"px";}}})();</script>
</body></html>
